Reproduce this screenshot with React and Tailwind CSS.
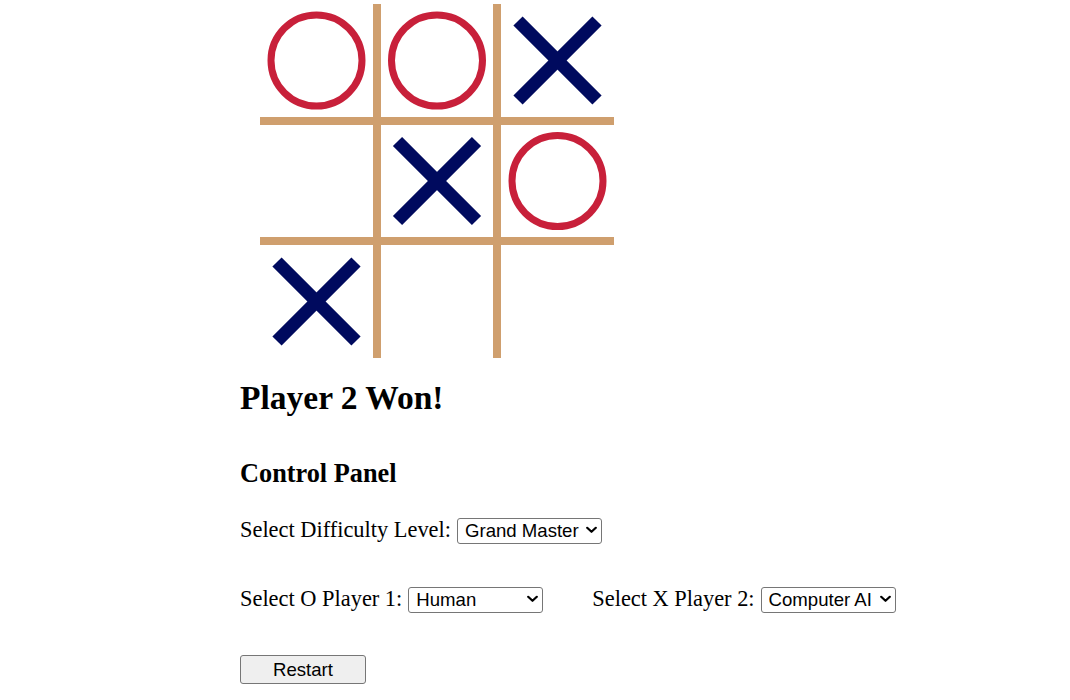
import { useState } from "react";

const TAN = "#CF9F6E";
const RED = "#C8203A";
const NAVY = "#000A5E";

const centers = [56.5, 177, 297.5];

const Mark = ({ value, row, col }) => {
    const cx = centers[col];
    const cy = centers[row];
    if (value === "O") {
        return <circle cx={cx} cy={cy} r={45.5} fill="none" stroke={RED} strokeWidth={7} />;
    }
    if (value === "X") {
        const d = 39.5;
        return (
            <g stroke={NAVY} strokeWidth={13} strokeLinecap="butt">
                <line x1={cx - d} y1={cy - d} x2={cx + d} y2={cy + d} />
                <line x1={cx + d} y1={cy - d} x2={cx - d} y2={cy + d} />
            </g>
        );
    }
    return null;
};

const Board = ({ cells }) => (
    <svg width="354" height="354" viewBox="0 0 354 354" className="block ml-[20px] mt-[4px]">
        <rect x="113" y="0" width="8" height="354" fill={TAN} />
        <rect x="233" y="0" width="8" height="354" fill={TAN} />
        <rect x="0" y="113" width="354" height="8" fill={TAN} />
        <rect x="0" y="233" width="354" height="8" fill={TAN} />
        {cells.map((v, i) => (
            <Mark key={i} value={v} row={Math.floor(i / 3)} col={i % 3} />
        ))}
    </svg>
);

const Chevron = () => (
    <svg width="11" height="7" viewBox="0 0 11 7" className="absolute right-[5px] top-1/2 -translate-y-1/2 pointer-events-none">
        <path d="M1.2 1.2 L5.5 5.3 L9.8 1.2" fill="none" stroke="#000" strokeWidth="2.2" strokeLinecap="round" strokeLinejoin="round" />
    </svg>
);

const Select = ({ value, onChange, options, width }) => (
    <div className={`relative ml-[6px] ${width}`}>
        <select
            value={value}
            onChange={(e) => onChange(e.target.value)}
            className="appearance-none w-full h-[26px] bg-white border border-[#767676] rounded-[3px] pl-[7px] pr-[20px] text-[18.6px] leading-[24px] text-black font-['Liberation_Sans',Arial,sans-serif] outline-none"
        >
            {options.map((o) => (
                <option key={o}>{o}</option>
            ))}
        </select>
        <Chevron />
    </div>
);

const App = () => {
    const [cells] = useState(["O", "O", "X", "", "X", "O", "X", "", ""]);
    const [level, setLevel] = useState("Grand Master");
    const [p1, setP1] = useState("Human");
    const [p2, setP2] = useState("Computer AI");

    return (
        <div className="min-h-[700px] bg-white pl-[240px] text-black font-['Liberation_Serif','Times_New_Roman',serif]">
            <Board cells={cells} />

            <h2 className="mt-[21px] text-[33.5px] leading-[38px] font-bold">Player 2 Won!</h2>

            <h3 className="mt-[42px] text-[26.3px] leading-[30px] font-bold">Control Panel</h3>

            <div className="mt-[28px] flex items-center h-[26px] text-[22.4px] leading-[26px]">
                <span>Select Difficulty Level:</span>
                <Select value={level} onChange={setLevel} options={["Beginner", "Intermediate", "Grand Master"]} width="w-[145px]" />
            </div>

            <div className="mt-[43px] flex items-center h-[26px] text-[22.4px] leading-[26px]">
                <span>Select O Player 1:</span>
                <Select value={p1} onChange={setP1} options={["Human", "Computer AI"]} width="w-[135px]" />
                <span className="ml-[49px]">Select X Player 2:</span>
                <Select value={p2} onChange={setP2} options={["Human", "Computer AI"]} width="w-[135px]" />
            </div>

            <button className="mt-[43px] block w-[126px] h-[29px] bg-[#efefef] border border-[#767676] rounded-[3px] text-[18.6px] leading-[26px] font-['Liberation_Sans',Arial,sans-serif]">
                Restart
            </button>
        </div>
    );
};

export default App;
